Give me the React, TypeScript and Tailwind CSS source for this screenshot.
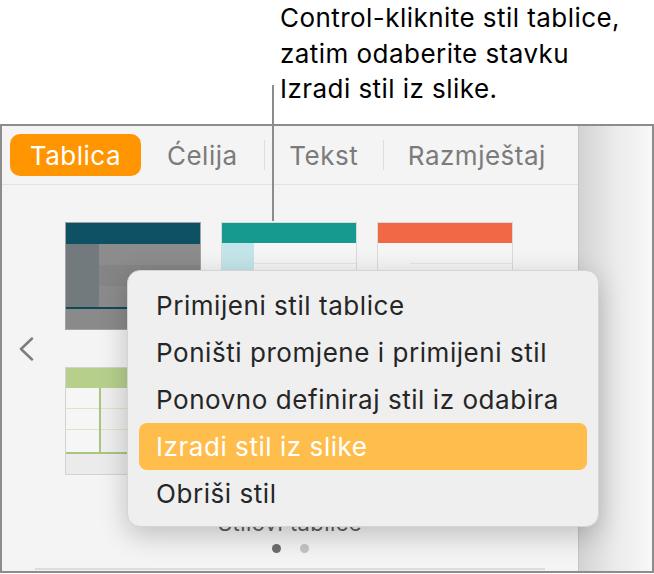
import React from "react";

const menuItems = [
  "Primijeni stil tablice",
  "Poništi promjene i primijeni stil",
  "Ponovno definiraj stil iz odabira",
  "Izradi stil iz slike",
  "Obriši stil",
];

function DarkThumb() {
  return (
    <div className="flex h-[108px] w-[136px] flex-col border border-[#a2a2a2] bg-[#8a8a8a]">
      <div className="h-[21px] bg-[#0e5164]" />
      <div className="flex h-[63px]">
        <div className="w-[33px] bg-[#727a7e]" />
        <div className="flex flex-1 flex-col">
          <div className="h-[21px] bg-[#8c8c8c]" />
          <div className="h-[21px] bg-[#858585]" />
          <div className="h-[21px] bg-[#8b8b8b]" />
        </div>
      </div>
      <div className="h-[2px] bg-[#10495a]" />
      <div className="flex-1 bg-[#8a8a8a]" />
    </div>
  );
}

function LightThumb({ head, col }: { head: string; col: string }) {
  return (
    <div className="flex h-[108px] w-[136px] flex-col border border-[#dadada] bg-[#f5f5f5]">
      <div className="h-[20px]" style={{ backgroundColor: head }} />
      <div className="flex h-[64px]">
        <div className="w-[32px]" style={{ backgroundColor: col }} />
        <div className="flex flex-1 flex-col">
          <div className="h-[21px] border-b border-[#e6e6e6]" />
          <div className="h-[21px] border-b border-[#e6e6e6]" />
          <div className="h-[21px]" />
        </div>
      </div>
      <div className="h-[1px] bg-[#e0e0e0]" />
      <div className="flex-1 bg-[#ededed]" />
    </div>
  );
}

function GreenThumb() {
  return (
    <div className="flex h-[108px] w-[136px] flex-col border border-[#d2d2d2] bg-[#efefef]">
      <div className="h-[20px] bg-[#b6d08c]" />
      <div className="flex h-[64px]">
        <div className="flex w-[33px] flex-col bg-[#f6f6f6]">
          <div className="h-[21px] border-b border-[#d9e5c8]" />
          <div className="h-[21px] border-b border-[#d9e5c8]" />
          <div className="h-[21px]" />
        </div>
        <div className="w-[2px] bg-[#a9c67e]" />
        <div className="flex flex-1 flex-col">
          <div className="h-[21px] border-b border-[#d9e5c8]" />
          <div className="h-[21px] border-b border-[#d9e5c8]" />
          <div className="h-[21px]" />
        </div>
      </div>
      <div className="h-[2px] bg-[#a9c67e]" />
      <div className="flex-1 bg-[#ebebeb]" />
    </div>
  );
}

export default function App() {
  return (
    <div
      className="relative h-[574px] w-[654px] overflow-hidden bg-white text-black"
      style={{ fontFamily: "Inter, 'Noto Sans', sans-serif" }}
    >
      {/* callout */}
      <div className="h-[124px] pl-[280px] text-[26px] leading-[35.5px] tracking-[0.45px] text-black">
        <div>Control-kliknite stil tablice,</div>
        <div>zatim odaberite stavku</div>
        <div>Izradi stil iz slike.</div>
      </div>

      {/* inspector frame */}
      <div className="flex h-[449px] w-[654px] border-2 border-[#8c8c8c]">
        <div className="flex w-[576px] flex-col bg-[#f4f4f4]">
          <div className="flex h-[59px] items-center border-b border-[#e2e2e2] px-[8px] text-[26px] tracking-[0.5px] text-[#7b7b7b]">
            <div className="flex h-[42px] w-[132px] items-center justify-center rounded-[10px] bg-[#ff9500] text-white">
              Tablica
            </div>
            <div className="w-[124px] text-center">Ćelija</div>
            <div className="h-[30px] w-px bg-[#dedede]" />
            <div className="w-[119px] text-center">Tekst</div>
            <div className="h-[30px] w-px bg-[#dedede]" />
            <div className="w-[188px] text-center">Razmještaj</div>
          </div>

          <div className="flex pt-[37px]">
            <div className="flex w-[63px] items-center pl-[16px]">
              <svg width="16" height="24" viewBox="0 0 16 24" fill="none">
                <polyline
                  points="14,1.5 3,12 14,22.5"
                  stroke="#7d7d7d"
                  strokeWidth="2.5"
                  strokeLinecap="round"
                  strokeLinejoin="round"
                />
              </svg>
            </div>
            <div className="grid grid-cols-[136px_136px_136px] gap-x-[20px] gap-y-[37px]">
              <DarkThumb />
              <LightThumb head="#16998e" col="#c3e5ea" />
              <LightThumb head="#f06944" col="#f5f5f5" />
              <GreenThumb />
              <LightThumb head="#3e7bc4" col="#dde8f5" />
              <LightThumb head="#6b6b6b" col="#e8e8e8" />
            </div>
          </div>

          <div className="mt-[37px] text-center text-[22px] leading-[22px] tracking-[0.4px] text-[#5c5c5c]">
            Stilovi tablice
          </div>
          <div className="mt-[10px] flex justify-center gap-[19px]">
            <div className="h-[9px] w-[9px] rounded-full bg-[#6d6d6d]" />
            <div className="h-[9px] w-[9px] rounded-full bg-[#c4c4c4]" />
          </div>
          <div className="mx-[33px] mt-[15px] h-[2px] bg-[#dcdcdc]" />
        </div>
        <div className="flex-1 border-l border-[#c4c4c4] bg-gradient-to-r from-[#d3d3d3] via-[#ebebeb] to-[#f8f8f8]" />
      </div>

      {/* callout line */}
      <div className="absolute left-[272px] top-[85px] h-[136px] w-[2px] bg-[#8c8c8c]" />

      {/* context menu */}
      <div className="absolute left-[127px] top-[270px] w-[472px] rounded-[13px] border border-[#d4d4d4] bg-[#efefef] px-[11px] pt-[11px] pb-[9px] shadow-[0_8px_28px_rgba(0,0,0,0.22)]">
        {menuItems.map((item, i) => (
          <div
            key={item}
            className={
              i === 3
                ? "flex h-[47px] items-center rounded-[8px] bg-[#ffbe4c] pl-[17px] text-[26px] tracking-[0.55px] text-white"
                : "flex h-[47px] items-center pl-[17px] text-[26px] tracking-[0.55px] text-[#262626]"
            }
          >
            {item}
          </div>
        ))}
      </div>
    </div>
  );
}
